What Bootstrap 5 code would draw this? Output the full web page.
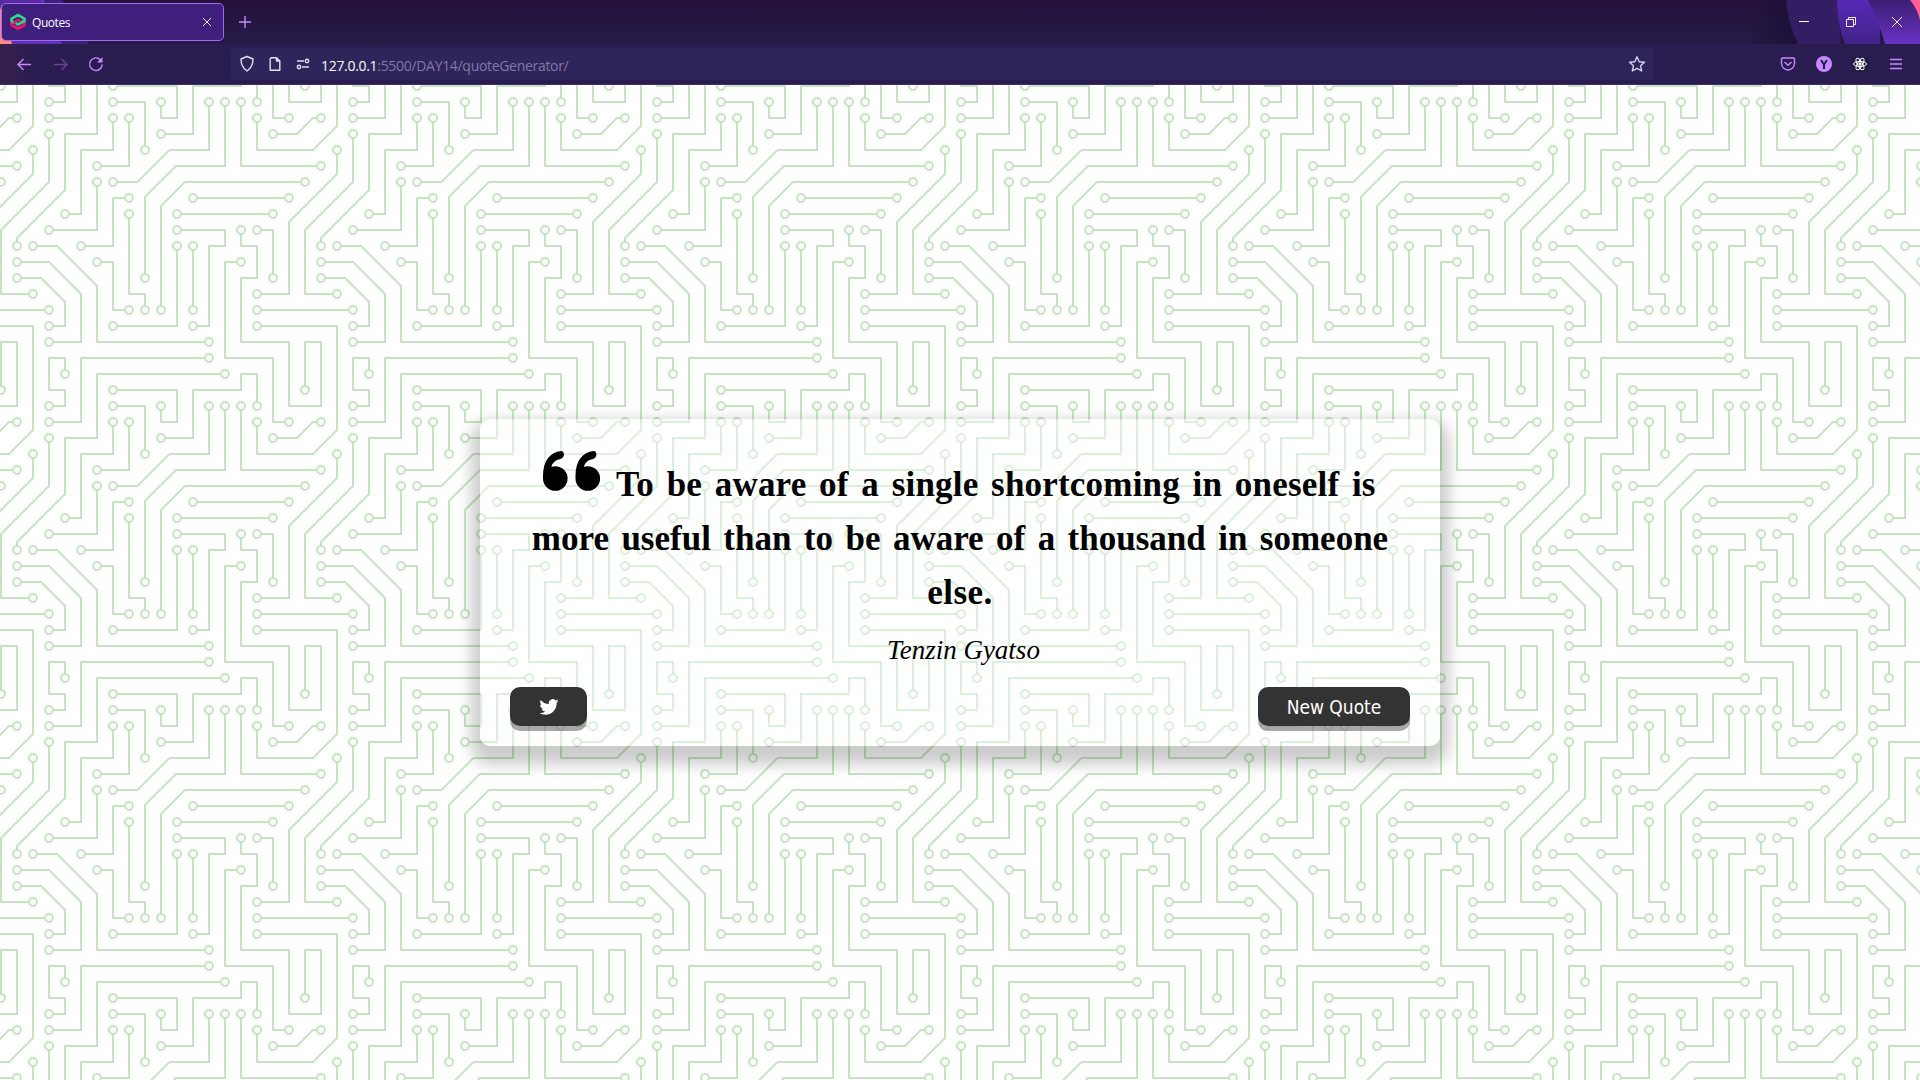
<!DOCTYPE html>
<html lang="en">
<head>
<meta charset="utf-8">
<title>Quotes</title>
<link href="https://cdn.jsdelivr.net/npm/bootstrap@5.3.0/dist/css/bootstrap.min.css" rel="stylesheet">
<style>
html,body{height:100%;overflow:hidden}
body{font-family:"Open Sans","Noto Sans",sans-serif;background:#fff}
svg{display:block;flex:none}
.browser-top{height:44px}
.theme-art{left:0;top:0;width:1920px;height:85px;z-index:0}
.tab-item{margin:3px 0 0 1px;width:223px;height:38px;border:1px solid #a368f5;border-radius:5px;background:#3e1f7b;color:#fbfbfe;font-size:12px;padding:0 11px 0 8px}
.tab-item span{letter-spacing:-.45px;margin-left:6px;padding-top:2px}
.new-tab{margin:16px 0 0 15px}
.window-buttons{padding:16px 17px 0 0;gap:35px}
.toolbar-row{height:41px;border-bottom:1px solid #412c70}
.toolbar-row,.browser-top{z-index:1}
.nav-icons{width:231px;padding-left:15px;gap:16px}
.url-box{width:1422px;height:32px;border-radius:4px;background:#2e255b;padding:0 7px;gap:10px}
.url-text{font-size:14px;letter-spacing:-.31px;color:#8279a6;margin-left:-1px;margin-top:2px;white-space:nowrap}
.url-text b{font-weight:400;color:#fbfbfe}
.right-icons{gap:16px;padding-right:14px}
.page-area{height:995px}
.circuit{inset:0;width:100%;height:100%;z-index:0}
.quote-box{z-index:1;width:960px;height:327px;border-radius:10px;background:rgba(255,255,255,.4);box-shadow:0 10px 15px 9px rgba(0,0,0,.2);padding:30px 30px 20px;color:#000}
.quote-line{font-family:"Liberation Serif",serif;font-weight:700;font-size:35px;line-height:54px;height:54px;white-space:nowrap;word-spacing:3.7px}
.first-row{padding-left:33px}
.first-row svg{margin-top:2px}
.first-row .quote-line{padding-top:9px;margin-left:15px;height:63px;letter-spacing:.2px}
.last-line{letter-spacing:.5px}
.author-name{font-family:"Liberation Serif",serif;font-style:italic;font-size:27px;line-height:36px;height:36px;margin-top:12px;padding-left:7px}
.dark-btn,.dark-btn:hover{background:#333;color:#fff;height:39px;border:0;border-radius:10px;box-shadow:0 5px 0 rgba(51,51,51,.42);padding:0;font:19px/40px "DejaVu Sans Condensed","DejaVu Sans",sans-serif;font-stretch:condensed}
.tweet-btn{width:77px}
.new-btn{width:152px}
</style>
</head>
<body class="d-flex flex-column position-relative">
<svg class="theme-art position-absolute" viewBox="0 0 1920 85">
<defs>
<linearGradient id="g1" x1="0" y1="0" x2="0" y2="1"><stop offset="0" stop-color="#25123c"/><stop offset="1" stop-color="#251a47"/></linearGradient>
<linearGradient id="g2" x1="0" y1="0" x2="0" y2="1"><stop offset="0" stop-color="#5729b4"/><stop offset="1" stop-color="#41238b"/></linearGradient>
<linearGradient id="g3" x1="0" y1="0" x2="0" y2="1"><stop offset="0" stop-color="#3b2072"/><stop offset="1" stop-color="#6a31c6"/></linearGradient>
<linearGradient id="g4" x1="0" y1="0" x2="1" y2="0"><stop offset="0" stop-color="#1b1038" stop-opacity="0"/><stop offset="1" stop-color="#1b1038"/></linearGradient>
<linearGradient id="g5" x1="0" y1="0" x2="1" y2="0"><stop offset="0" stop-color="#35214c"/><stop offset=".35" stop-color="#2a1c50"/><stop offset="1" stop-color="#291d50"/></linearGradient>
</defs>
<rect width="1920" height="44" fill="url(#g1)"/>
<path d="M0 0H62L86 36 88 44H0z" fill="#3a2377"/><path d="M0 0H44L62 44H0z" fill="#5f31b4"/><path d="M0 0L12 44H0z" fill="#ff8a7c"/><path d="M0 0H36L44 4H0z" fill="#5a2aa0"/><path d="M0 0V10L3 0z" fill="#5a2aa0"/>
<path d="M1750 0H1786Q1790 24 1798 44H1750z" fill="url(#g4)"/>
<path d="M1786 0H1840V44H1798Q1788 24 1786 0z" fill="#331d63"/>
<path d="M1837 0H1880V44H1845Q1837 24 1837 0z" fill="url(#g2)"/>
<path d="M1868 0H1920V44H1885Q1879 22 1868 0z" fill="url(#g3)"/>
<path d="M1910 0H1920V20Q1917 8 1910 0z" fill="#ff5f96"/>
<rect y="44" width="1920" height="41" fill="#291d50"/><rect y="44" width="105" height="41" fill="url(#g5)"/>
</svg>
<div class="browser-top d-flex position-relative">
 <div class="tab-item d-flex align-items-center">
  <svg width="16" height="18" viewBox="0 0 16 18" fill="none" stroke-width="2.600"><path d="M4.500 8.500 1.500 10.500V12L8 15.700 14.500 12V9L11.500 7.200" stroke="#f5116c"/><path d="M4.500 10 1.500 8V5.700L8 2l6.500 3.700V8L8 11.500 5.500 10" stroke="#2dd98c"/><path d="M3 9.800 8 6.800l2.500 1.500" stroke="#f5116c" stroke-width="2"/></svg>
  <span class="flex-grow-1">Quotes</span>
  <svg width="10" height="10" viewBox="0 0 10 10" stroke="#e8e0f8" fill="none"><path d="m1 1 8 8M9 1 1 9"/></svg>
 </div>
 <svg class="new-tab" width="12" height="12" viewBox="0 0 12 12" stroke="#c689ff" stroke-width="1.400"><path d="M6 0v12M0 6h12"/></svg>
 <div class="window-buttons ms-auto d-flex">
  <svg width="11" height="12" viewBox="0 0 11 12" stroke="#fff"><path d="M1 5.500h10"/></svg>
  <svg width="12" height="12" viewBox="0 0 12 12" stroke="#f3eefb" fill="none"><path d="M2.500 3.500h7v7h-7zM4.500 3.500v-2h7v7h-2"/></svg>
  <svg width="12" height="12" viewBox="0 0 12 12" stroke="#f3eefb" fill="none"><path d="m1 1 10 10M11 1 1 11"/></svg>
 </div>
</div>
<div class="toolbar-row d-flex align-items-center position-relative">
 <div class="nav-icons d-flex">
  <svg width="20" height="16" viewBox="0 0 20 16" stroke="#c689ff" stroke-width="1.400" fill="none"><path d="M16 8.500H3M8.500 3 3 8.500 8.500 14"/></svg>
  <svg width="20" height="16" viewBox="0 0 20 16" stroke="#69438f" stroke-width="1.400" fill="none"><path d="M3 8.500h13M10.500 3 16 8.500 10.500 14"/></svg>
  <svg width="20" height="16" viewBox="0 0 20 16" stroke="#c689ff" stroke-width="1.400" fill="none"><path d="M13.600 4A6.300 6.300 0 1 0 15.200 8.500"/><path d="M15.500 1v5.500H10z" fill="#c689ff" stroke="none"/></svg>
 </div>
 <div class="url-box d-flex align-items-center">
  <svg width="18" height="18" viewBox="0 0 18 18" stroke="#e4dcf8" stroke-width="1.400" fill="none"><path d="M9 1.500 15 4c0 5-1.500 9-6 12C4.500 13 3 9 3 4z" stroke-linejoin="round"/></svg>
  <svg width="18" height="18" viewBox="0 0 18 18" stroke="#e4dcf8" stroke-width="1.400" fill="none"><path d="M5.200 2.700h5.300l3.300 3.300v9.300H4.200V3.700z" stroke-linejoin="round"/><path d="M9.800 2v4.800h4.700" fill="#e4dcf8" stroke="none"/></svg>
  <svg width="18" height="18" viewBox="0 0 18 18" stroke="#e4dcf8" stroke-width="1.400" fill="none"><path d="M3 6h7M8 12h7"/><circle cx="13" cy="6" r="1.700"/><circle cx="5" cy="12" r="1.700"/></svg>
  <div class="url-text flex-grow-1"><b>127.0.0.1</b>:5500/DAY14/quoteGenerator/</div>
  <svg width="18" height="18" viewBox="0 0 18 18" stroke="#d8d0f0" stroke-width="1.400" fill="none"><path d="m9 1.800 2.200 4.900 5.300.5-4 3.600 1.200 5.200L9 13.300 4.300 16l1.200-5.200-4-3.600 5.300-.5z" stroke-linejoin="round"/></svg>
 </div>
 <div class="right-icons d-flex align-items-center ms-auto">
  <svg width="20" height="18" viewBox="0 0 20 18" stroke="#c689ff" stroke-width="1.400" fill="none"><path d="M4.500 3h11q1 0 1 1v4.500a6.500 6.500 0 0 1-13 0V4q0-1 1-1zM6.500 7 10 10.300 13.500 7"/></svg>
  <svg width="20" height="18" viewBox="0 0 20 18"><circle cx="10" cy="9" r="8" fill="#c689ff"/><path d="m7 5 3 4.500L13 5M10 9v5" stroke="#291d50" stroke-width="2" fill="none"/></svg>
  <svg width="20" height="18" viewBox="0 0 20 18" stroke="#fff" fill="none"><rect x="2" y="2" width="16" height="15" fill="#211a3f" stroke="none"/><g transform="translate(10 9)"><ellipse rx="6.500" ry="2.500"/><ellipse rx="6.500" ry="2.500" transform="rotate(60)"/><ellipse rx="6.500" ry="2.500" transform="rotate(120)"/><circle r="1.200" fill="#fff"/></g></svg>
  <svg width="20" height="18" viewBox="0 0 20 18" stroke="#c689ff" stroke-width="1.300"><path d="M4 4.500h12M4 9h12M4 13.500h12"/></svg>
 </div>
</div>
<main class="page-area position-relative d-flex align-items-center justify-content-center">
<svg class="circuit position-absolute">
<defs><pattern id="board" width="304" height="304" patternUnits="userSpaceOnUse">
<path fill="#c5e5c1" d="M44.1 224a5 5 0 1 1 0 2H0v-2h44.1zm160 48a5 5 0 1 1 0 2H82v-2h122.1zm57.8-46a5 5 0 1 1 0-2H304v2h-42.1zm0 16a5 5 0 1 1 0-2H304v2h-42.1zm6.2-114a5 5 0 1 1 0 2h-86.2a5 5 0 1 1 0-2h86.2zm-256-48a5 5 0 1 1 0 2H0v-2h12.1zm185.8 34a5 5 0 1 1 0-2h86.2a5 5 0 1 1 0 2h-86.2zM258 12.1a5 5 0 1 1-2 0V0h2v12.1zm-64 208a5 5 0 1 1-2 0v-54.2a5 5 0 1 1 2 0v54.2zm48-198.2V80h62v2h-64V21.9a5 5 0 1 1 2 0zm16 16V64h46v2h-48V37.9a5 5 0 1 1 2 0zm-128 96V208h16v12.1a5 5 0 1 1-2 0V210h-16v-76.1a5 5 0 1 1 2 0zm-5.900-21.900a5 5 0 1 1 0 2H114v48H85.900a5 5 0 1 1 0-2H112v-48h12.100zm-6.200 130a5 5 0 1 1 0-2H176v-74.100a5 5 0 1 1 2 0V242h-60.100zm-16-64a5 5 0 1 1 0-2H114v48h10.100a5 5 0 1 1 0 2H112v-48h-10.100zM66 284.100a5 5 0 1 1-2 0V274H50v30h-2v-32h18v12.100zM236.100 176a5 5 0 1 1 0 2H226v94h48v32h-2v-30h-48v-98h12.100zm25.800-30a5 5 0 1 1 0-2H274v44.100a5 5 0 1 1-2 0V146h-10.100zm-64 96a5 5 0 1 1 0-2H208v-80h16v-14h-42.100a5 5 0 1 1 0-2H226v18h-16v80h-12.100zm86.200-210a5 5 0 1 1 0 2H272V0h2v32h10.100zM98 101.900V146H53.900a5 5 0 1 1 0-2H96v-42.100a5 5 0 1 1 2 0zM53.900 34a5 5 0 1 1 0-2H80V0h2v34H53.900zm60.100 3.900V66H82v64H69.900a5 5 0 1 1 0-2H80V64h32V37.900a5 5 0 1 1 2 0zM101.900 82a5 5 0 1 1 0-2H128V37.900a5 5 0 1 1 2 0V82h-28.100zm16-64a5 5 0 1 1 0-2H146v44.100a5 5 0 1 1-2 0V18h-26.100zm102.200 270a5 5 0 1 1 0 2H98v14h-2v-16h124.100zM242 149.900V160h16v34h-16v62h48v48h-2v-46h-48v-66h16v-30h-16v-12.100a5 5 0 1 1 2 0zM53.900 18a5 5 0 1 1 0-2H64V2H48V0h18v18H53.900zm112 32a5 5 0 1 1 0-2H192V0h50v2h-48v48h-28.100zm-48-48a5 5 0 0 1-9.800-2h2.070a3 3 0 1 0 5.660 0H178v34h-18V21.900a5 5 0 1 1 2 0V32h14V2h-58.100zm0 96a5 5 0 1 1 0-2H137l32-32h39V21.900a5 5 0 1 1 2 0V66h-40.170l-32 32H117.900zm28.100 90.100a5 5 0 1 1-2 0v-76.510L175.590 80H224V21.900a5 5 0 1 1 2 0V82h-49.590L146 112.410v75.690zm16 32a5 5 0 1 1-2 0v-99.510L184.590 96H300.100a5 5 0 0 1 3.900-3.900v2.070a3 3 0 0 0 0 5.660v2.070a5 5 0 0 1-3.900-3.900H185.410L162 121.410v98.690zm-144-64a5 5 0 1 1-2 0v-3.510l48-48V48h32V0h2v50H66v55.410l-48 48v2.690zM50 53.900v43.510l-48 48V208h26.100a5 5 0 1 1 0 2H0v-65.410l48-48V53.900a5 5 0 1 1 2 0zm-16 16V89.410l-34 34v-2.820l32-32V69.900a5 5 0 1 1 2 0zM12.100 32a5 5 0 1 1 0 2H9.410L0 43.410V40.600L8.590 32h3.510zm265.800 18a5 5 0 1 1 0-2h18.690l7.410-7.410v2.820L297.410 50H277.900zm-16 160a5 5 0 1 1 0-2H288v-71.410l16-16v2.820l-14 14V210h-28.100zm-208 32a5 5 0 1 1 0-2H64v-22.590L40.590 194H21.900a5 5 0 1 1 0-2H41.410L66 216.590V242H53.900zm150.200 14a5 5 0 1 1 0 2H96v-56.600L56.600 162H37.900a5 5 0 1 1 0-2h19.500L98 200.600V256h106.100zm-150.200 2a5 5 0 1 1 0-2H80v-46.590L48.590 178H21.900a5 5 0 1 1 0-2H49.410L82 208.590V258H53.900zM34 39.800v1.610L9.410 66H0v-2h8.590L32 40.590V0h2v39.800zM2 300.100a5 5 0 0 1 3.900 3.900H3.830A3 3 0 0 0 0 302.170V256h18v48h-2v-46H2v42.100zM34 241v63h-2v-62H0v-2h34v1zM17 18H0v-2h16V0h2v18h-1zm273-2h14v2h-16V0h2v16zm-32 273v15h-2v-14h-14v14h-2v-16h18v1zM0 92.100A5.020 5.020 0 0 1 6 97a5 5 0 0 1-6 4.900v-2.070a3 3 0 1 0 0-5.660V92.100zM80 272h2v32h-2v-32zm37.900 32h-2.070a3 3 0 0 0-5.660 0h-2.070a5 5 0 0 1 9.800 0zM5.900 0A5.020 5.020 0 0 1 0 5.900V3.830A3 3 0 0 0 3.830 0H5.900zm294.200 0h2.070A3 3 0 0 0 304 3.830V5.900a5 5 0 0 1-3.900-5.900zm3.900 300.100v2.070a3 3 0 0 0-1.830 1.830h-2.070a5 5 0 0 1 3.900-3.900z"/>
<path stroke="#fff" stroke-width="6" stroke-linecap="round" fill="none" d="M49 225h0M209 273h0M257 225h0M257 241h0M273 129h0M177 129h0M17 81h0M193 113h0M289 113h0M257 17h0M193 225h0M193 161h0M241 17h0M257 33h0M129 129h0M145 225h0M129 113h0M81 161h0M113 241h0M177 161h0M97 177h0M129 225h0M65 289h0M241 177h0M257 145h0M273 193h0M193 241h0M177 145h0M289 33h0M97 97h0M49 145h0M49 33h0M113 33h0M65 129h0M97 81h0M129 33h0M113 17h0M145 65h0M225 289h0M241 145h0M49 17h0M161 49h0M161 17h0M113 97h0M209 17h0M145 193h0M225 17h0M161 225h0M17 161h0M49 49h0M33 209h0M33 65h0M17 33h0M273 49h0M257 209h0M49 241h0M17 193h0M209 257h0M33 161h0M49 257h0M17 177h0"/>
</pattern></defs>
<rect width="100%" height="100%" fill="url(#board)"/>
</svg>
<section class="quote-box d-flex flex-column">
 <div class="first-row d-flex">
  <svg width="58" height="42" viewBox="0 0 58 42"><path id="qm" d="M18 0C7 1 0 10 0 25v2.500a12.300 12.300 0 1 0 12.300-12.300c-1.400 0-2.700.2-3.900.6C9.500 11.500 12.500 9 17.500 8 22 7 22 0 18 0z"/><use href="#qm" x="32.500"/></svg>
  <div class="quote-line">To be aware of a single shortcoming in oneself is</div>
 </div>
 <div class="quote-line text-center">more useful than to be aware of a thousand in someone</div>
 <div class="quote-line last-line text-center">else.</div>
 <div class="author-name text-center">Tenzin Gyatso</div>
 <div class="d-flex justify-content-between mt-auto">
  <button class="btn dark-btn tweet-btn d-flex align-items-center justify-content-center"><svg width="20" height="16" viewBox="0 0 24 20" fill="#fff"><path d="M23.950 2.570a10 10 0 0 1-2.820.770 4.960 4.960 0 0 0 2.160-2.720c-.950.560-2 .960-3.130 1.180a4.920 4.920 0 0 0-8.380 4.480C7.690 6.090 4.070 4.130 1.640 1.160a4.820 4.820 0 0 0-.670 2.480c0 1.710.870 3.210 2.190 4.100a4.900 4.900 0 0 1-2.230-.620v.060a4.920 4.920 0 0 0 3.950 4.830 5 5 0 0 1-2.210.080 4.940 4.940 0 0 0 4.600 3.420A9.870 9.870 0 0 1 0 17.540a14 14 0 0 0 7.550 2.210c9.050 0 14-7.500 14-13.990l-.020-.630a9.900 9.900 0 0 0 2.460-2.550z"/></svg></button>
  <button class="btn dark-btn new-btn">New Quote</button>
 </div>
</section>
</main>
<script src="https://cdn.jsdelivr.net/npm/bootstrap@5.3.0/dist/js/bootstrap.bundle.min.js"></script>
</body>
</html>
